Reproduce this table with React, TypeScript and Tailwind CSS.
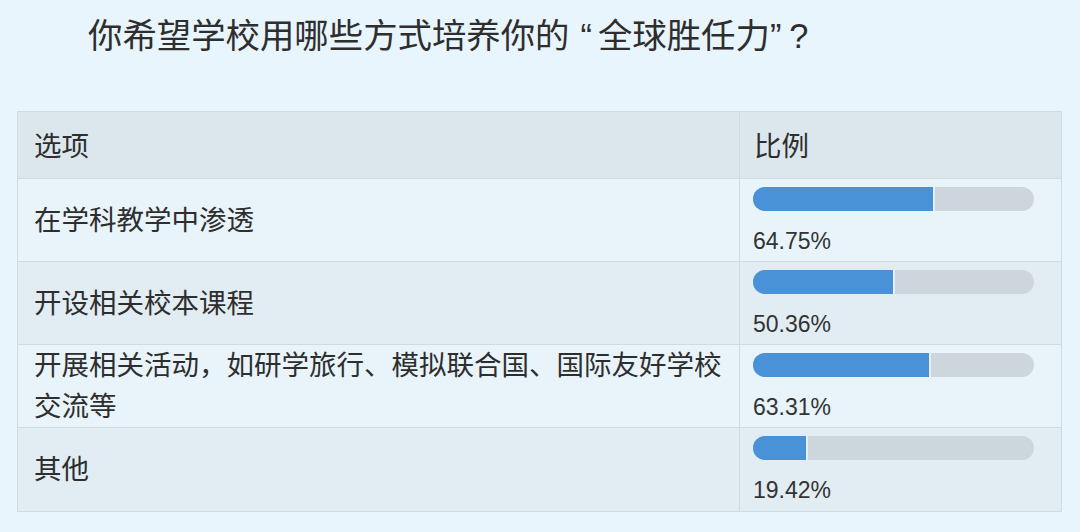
const rows = [
  { label: '在学科教学中渗透', pct: 64.75 },
  { label: '开设相关校本课程', pct: 50.36 },
  { label: '开展相关活动，如研学旅行、模拟联合国、国际友好学校交流等', pct: 63.31 },
  { label: '其他', pct: 19.42 },
];

const cjk = { fontFamily: '"Liberation Sans", "Noto Sans CJK SC", sans-serif' };

export default function App() {
  return (
    <div className="w-[1080px] h-[532px] bg-[#e8f5fc] overflow-hidden text-[#2e2e2e]" style={cjk}>
      <h1 className="ml-[88px] pt-[19px] text-[34.4px] leading-[34px] font-normal whitespace-nowrap">
        你希望学校用哪些方式培养你的<span className="ml-[11px] mr-[6px]">“</span>全球胜任力”<span className="ml-[8px]">?</span>
      </h1>

      <div className="ml-[17px] mt-[58px] w-[1045px] border border-[#cfdbe2]">
        <div className="grid grid-cols-[722px_321px] h-[67px] bg-[#dce7ed] border-b border-[#cfdbe2]">
          <div className="flex items-center pl-[16px] pt-[4px] text-[27.5px] border-r border-[#cfdbe2]">选项</div>
          <div className="flex items-center pl-[14px] pt-[4px] text-[27.5px]">比例</div>
        </div>

        {rows.map((r, i) => (
          <div
            key={r.label}
            className={`grid grid-cols-[722px_321px] h-[83px] ${i < rows.length - 1 ? 'border-b' : ''} border-[#cfdbe2] ${
              i % 2 === 1 ? 'bg-[#e2edf3]' : 'bg-[#e8f4fa]'
            }`}
          >
            <div className="flex items-center pl-[16px] pr-[16px] text-[27.5px] leading-[41px] border-r border-[#cfdbe2]">
              {r.label}
            </div>
            <div className="pl-[13px] pt-[8px]">
              <div className="flex w-[281px] h-[24px] rounded-full bg-[#cdd6dc] overflow-hidden">
                <div className="h-full bg-[#4a92d8] border-r-2 border-[#e6f0f6]" style={{ width: `${r.pct}%` }} />
              </div>
              <div className="mt-[17px] text-[23px] leading-[26px] text-[#333]" style={{ fontFamily: '"Liberation Sans", sans-serif' }}>
                {r.pct.toFixed(2)}%
              </div>
            </div>
          </div>
        ))}
      </div>
    </div>
  );
}
